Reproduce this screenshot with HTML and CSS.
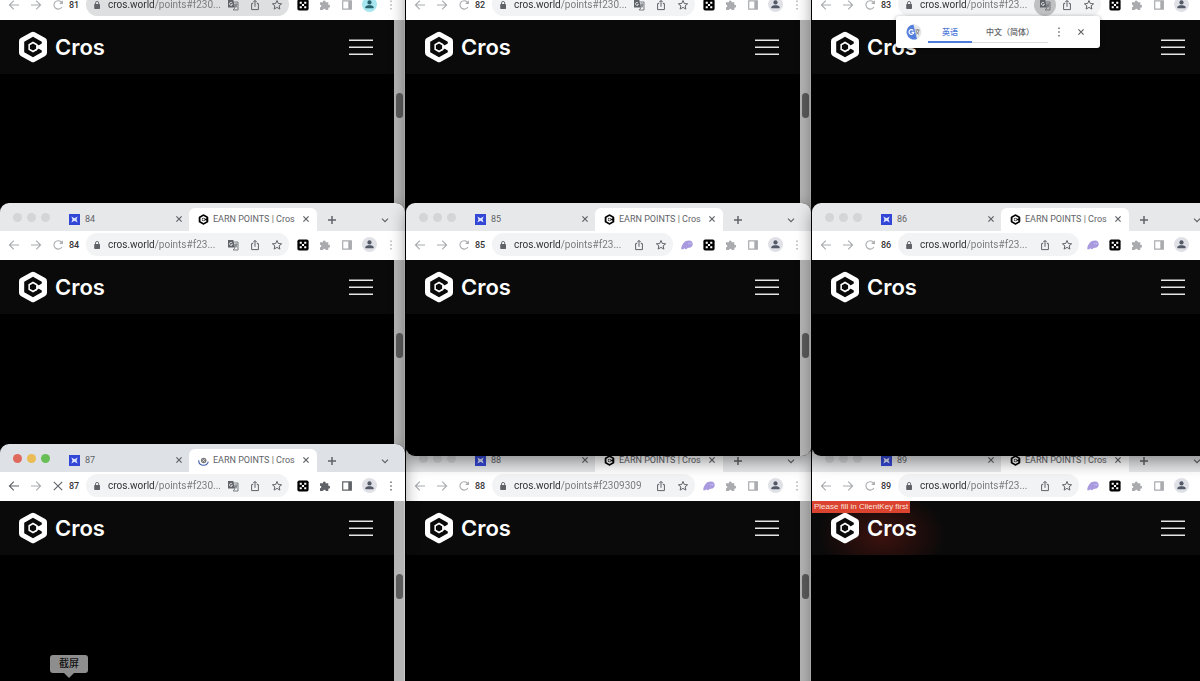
FILE: index.html
```
<!DOCTYPE html>
<html lang="zh-CN">
<head>
    <meta charset="UTF-8">
    <meta name="viewport" content="width=device-width, initial-scale=1.0">
    <title>Desktop</title>
    <link rel="stylesheet" href="styles.css">
</head>
<body>
    <svg class="sprite" aria-hidden="true">
        <symbol id="back" viewBox="0 0 12 12"><path d="M11 6H1.5M5.8 1.6 1.4 6l4.4 4.4" fill="none" stroke="currentColor" stroke-width="1.1"/></symbol>
        <symbol id="forward" viewBox="0 0 12 12"><path d="M1 6h9.5M6.2 1.6 10.6 6l-4.4 4.4" fill="none" stroke="currentColor" stroke-width="1.1"/></symbol>
        <symbol id="reload" viewBox="0 0 12 12"><path d="M9.8 8a4.2 4.2 0 1 1-.6-5l1.2 1.3" fill="none" stroke="currentColor" stroke-width="1.1"/><path d="M10.9 1.2v3.7H7.2z" fill="currentColor"/></symbol>
        <symbol id="stop" viewBox="0 0 12 12"><path d="m1.8 1.8 8.4 8.4m0-8.4-8.4 8.4" fill="none" stroke="currentColor" stroke-width="1.1"/></symbol>
        <symbol id="close" viewBox="0 0 12 12"><path d="m3.4 3.4 5.2 5.2m0-5.2L3.4 8.6" fill="none" stroke="currentColor" stroke-width="1.2"/></symbol>
        <symbol id="plus" viewBox="0 0 12 12"><path d="M6 2v8M2 6h8" fill="none" stroke="currentColor" stroke-width="1.5"/></symbol>
        <symbol id="chevron" viewBox="0 0 12 12"><path d="m3 4.6 3 3 3-3" fill="none" stroke="currentColor" stroke-width="1.2"/></symbol>
        <symbol id="lock" viewBox="0 0 12 12"><rect x="3.2" y="5" width="5.8" height="5" rx=".7" fill="currentColor"/><path d="M4.5 5.4V4a1.6 1.6 0 0 1 3.2 0v1.4" fill="none" stroke="currentColor" stroke-width=".9"/></symbol>
        <symbol id="translate" viewBox="0 0 12 12"><path d="M1 1h5.3l1.8 7.6H1z" fill="currentColor"/><path d="M5.3 4.2A1.5 1.5 0 1 0 5.4 5.4H4" fill="none" stroke="#fff" stroke-width=".7"/><path d="M6.9 3H11v8H6.2l1.8-2.3M7.6 5.2h2.8M9 4.4v.8M10 5.3C9.6 7 8.7 7.9 7.7 8.3M8 5.8c.4 1 1.2 1.9 2.2 2.5" fill="none" stroke="currentColor" stroke-width=".8"/></symbol>
        <symbol id="share" viewBox="0 0 12 12"><path d="M4.2 4.6H2.600v6h6.800v-6H7.800M6 7.800V1.500M4.100 3.300 6 1.400l1.900 1.900" fill="none" stroke="currentColor" stroke-width="1"/></symbol>
        <symbol id="star" viewBox="0 0 12 12"><path d="m6 1.500 1.300 3 3.300.3-2.500 2.100.8 3.200L6 8.400l-2.900 1.700.8-3.200L1.400 4.800l3.300-.3z" fill="none" stroke="currentColor" stroke-width="1"/></symbol>
        <symbol id="dice" viewBox="0 0 12 12"><rect x=".4" y=".4" width="11.200" height="11.200" rx="1.800" fill="#000"/><path d="M2.700 2.700h2.100v2.100H2.700zM7.200 2.700h2.100v2.100H7.200zM4.950 4.950h2.100v2.100h-2.100zM2.700 7.200h2.100v2.100H2.700zM7.200 7.200h2.100v2.100H7.200z" fill="#fff"/></symbol>
        <symbol id="phoenix" viewBox="0 0 12 12"><path d="M.2 10.200C.7 5 3.800 1.500 8 1.600c2.600.1 4 1.700 3.700 4-.2 1.900-1.700 3.300-3.700 3.200-1-.1-1.300.3-2.100.9-1.200.9-2.200.3-2.400-.7-.5.9-1 1.600-3.300 1.200z" fill="#a99ae0"/><path d="M7.900 3.800v1.500M9.700 3.800v1.500" stroke="#e8e2ff" stroke-width=".6"/></symbol>
        <symbol id="puzzle" viewBox="0 0 12 12"><path d="M1 3.200h2.900a1.400 1.400 0 1 1 2.700 0h2.700v2.700a1.400 1.400 0 1 1 0 2.700V11H6.700a1.300 1.300 0 1 0-2.600 0H1V8.300a1.300 1.300 0 1 0 0-2.600z" fill="currentColor"/></symbol>
        <symbol id="panel" viewBox="0 0 12 12"><path d="M1.700 1.900h8.600v8.200H1.700z" fill="none" stroke="currentColor" stroke-width="1.200"/><path d="M7.300 2h3v8h-3z" fill="currentColor"/></symbol>
        <symbol id="person" viewBox="0 0 12 12"><circle cx="6" cy="3.700" r="2.300" fill="currentColor"/><path d="M1.500 10.200V8.900C1.500 7.400 4 6.700 6 6.700s4.500.7 4.500 2.200v1.300z" fill="currentColor"/></symbol>
        <symbol id="dots" viewBox="0 0 12 12"><path d="M5.300 1.500h1.400v1.400H5.300zM5.300 5.300h1.400v1.400H5.300zM5.300 9.100h1.400v1.400H5.300z" fill="currentColor"/></symbol>
        <symbol id="site" viewBox="0 0 12 12"><path d="M0 0h12v12H0z" fill="#3347d6"/><path d="m2.600 2.600 3.400 2 3.400-2L8.200 6l1.200 3.400-3.400-2-3.400 2L3.800 6z" fill="#dfe5ff"/></symbol>
        <symbol id="cros" viewBox="0 0 30 32">
            <path d="M13.200 1.200a3.500 3.500 0 0 1 3.600 0l10.400 5.900A3.500 3.500 0 0 1 29 10.200v11.600a3.500 3.500 0 0 1-1.800 3.100l-10.400 5.900a3.500 3.500 0 0 1-3.600 0L2.800 24.900A3.500 3.500 0 0 1 1 21.800V10.200a3.500 3.500 0 0 1 1.800-3.100z" fill="var(--logo)"/>
            <path d="m15 5.800 8.800 5v1.600l-3.400 2-1.800-1V18.600l1.800-1 3.400 2v1.600l-8.800 5-8.800-5V10.800z" fill="var(--hole)"/>
            <path d="m15 10.600 3.900 2.200 1.600 1.600v3.200l-1.600 1.600-3.900 2.200-4.600-2.700v-5.400z" fill="var(--logo)"/>
            <path d="m15 12.400 3.100 1.800v3.600L15 19.600l-3.100-1.800v-3.600z" fill="var(--hole)"/>
        </symbol>
        <symbol id="loading" viewBox="0 0 12 12"><circle cx="6.200" cy="6" r="3" fill="#777"/><path d="m4.600 7.500 3.200-3.300M5 4.600l2.400 2.900" stroke="#eee" stroke-width=".7"/><path d="M.8 5.800a5.300 5.300 0 0 0 10.400 1.500" fill="none" stroke="#3f5fa8" stroke-width="1.200"/></symbol>
        <symbol id="burger" viewBox="0 0 24 16"><path d="M0 1.200h24M0 8.200h24M0 15.200h24" stroke="#e6e6e6" stroke-width="1.400"/></symbol>
    </svg>

    <main class="desktop" id="desktop">
        <div class="translate-popup">
            <svg class="popup-logo" viewBox="0 0 16 16" aria-hidden="true">
                <circle cx="8" cy="8" r="7.500" fill="#e4e6ea"/>
                <path d="M8 .5a7.500 7.500 0 1 0 3 14.400L7.500 1z" fill="#557fdd"/>
                <path d="M7.300 6.500A2.400 2.400 0 1 0 7.800 8.300H5.500" fill="none" stroke="#fff" stroke-width="1.200"/>
                <path d="M9.300 6h4.200M11.400 5v1M13 6.200c-.5 2-1.500 3.200-2.700 4M10 7c.6 1.500 1.600 2.500 3 3.300" fill="none" stroke="#777" stroke-width=".9"/>
            </svg>
            <button class="language current">英语</button>
            <button class="language">中文（简体）</button>
            <button class="icon" aria-label="Translate options"><svg><use href="#dots"/></svg></button>
            <button class="icon" aria-label="Close translate"><svg><use href="#close"/></svg></button>
        </div>
        <div class="dock-label">截屏</div>
    </main>
    <script src="script.js"></script>
</body>
</html>
```
FILE: styles.css
```
* {
    box-sizing: border-box;
}

body {
    margin: 0;
    font-family: Roboto, "Noto Sans CJK SC", sans-serif;
    font-size: 10px;
    background-color: #000;
}

button {
    padding: 0;
    border: none;
    background: none;
    color: inherit;
    font: inherit;
    cursor: pointer;
}

.sprite {
    display: none;
}

.desktop {
    position: relative;
    height: 100vh;
    overflow: hidden;
}

/* Windows on the desktop */
.window {
    --icon: #a9abae;
    --tabbar: #e7e8ea;
    --light: #d4d5d7;
    position: absolute;
    display: flex;
    flex-direction: column;
    width: 405px;
    height: 253px;
    border-radius: 9px;
    overflow: hidden;
    background-color: #000;
    box-shadow: 0 6px 16px rgba(0, 0, 0, 0.4);
}

.col-1 { left: 0; }
.col-2 { left: 406px; }
.col-3 { left: 812px; }

.row-1 { top: -37px; z-index: 1; }
.row-2 { top: 203px; z-index: 3; }
.row-3 { top: 444px; z-index: 2; }

.window.focused {
    --icon: #5f6368;
    --tabbar: #dee1e6;
    z-index: 4;
}

.tab-bar {
    display: flex;
    align-items: flex-end;
    flex: none;
    height: 28px;
    padding-left: 13px;
    background-color: var(--tabbar);
    color: #5f6368;
}

.lights {
    display: flex;
    align-items: center;
    gap: 5px;
    width: 47px;
    height: 28px;
}

.light {
    width: 9px;
    height: 9px;
    border-radius: 50%;
    background-color: var(--light);
}

.focused .light.red { background-color: #e0695e; }
.focused .light.yellow { background-color: #ebbc53; }
.focused .light.green { background-color: #67bf55; }

.tab {
    display: flex;
    align-items: center;
    gap: 5px;
    width: 129px;
    height: 23px;
    padding: 0 4px 1px 9px;
    border-radius: 6px 6px 0 0;
    font-size: 9px;
}

.tab.active {
    gap: 4px;
    width: 128px;
    padding-right: 5px;
    background-color: #fff;
}

.tab-title {
    flex: 1;
    text-align: left;
    white-space: nowrap;
}

.favicon {
    --logo: #000;
    --hole: #fff;
    width: 11px;
    height: 11px;
}

.icon {
    display: flex;
    flex: none;
    align-items: center;
    justify-content: center;
    width: 22px;
    height: 22px;
    color: inherit;
}

.icon svg {
    width: 12px;
    height: 12px;
}

.tab .icon {
    width: 12px;
}

.new-tab {
    margin-left: 4px;
}

.tab-search {
    margin-left: auto;
    margin-right: 9px;
}

.toolbar {
    display: flex;
    align-items: center;
    flex: none;
    height: 29px;
    padding: 0 3px 2px;
    background-color: #fff;
    color: var(--icon);
}

.focused .forward {
    color: #a9abae;
}

.profile-name {
    width: 17px;
    color: #333;
    font-size: 9px;
    font-weight: 500;
}

.address {
    display: flex;
    flex: 1;
    align-items: center;
    min-width: 0;
    height: 23px;
    margin-right: 3px;
    padding-right: 1px;
    border-radius: 12px;
    background-color: #f1f3f4;
    color: #5f6368;
}

.address.hover {
    background-color: #dedfe0;
}

.address input {
    flex: 1;
    min-width: 0;
    padding: 0;
    border: none;
    outline: none;
    background: linear-gradient(to right, #2b2c2e 47px, #75787c 47px);
    -webkit-background-clip: text;
    background-clip: text;
    color: transparent;
    font: inherit;
}

.pressed {
    border-radius: 50%;
    background-color: #bfc0c2;
}

.avatar svg {
    width: 15px;
    height: 15px;
    padding: 2px;
    border-radius: 50%;
    background-color: #dfe1e6;
    color: #535966;
}

.avatar.cyan svg {
    background-color: #a6e6ee;
    color: #28626c;
}

/* The web page inside each window */
.content {
    position: relative;
    display: flex;
    flex: 1;
}

.site {
    flex: 1;
}

.site-header {
    display: flex;
    align-items: center;
    justify-content: space-between;
    height: 54px;
    padding: 0 21px 1px 18px;
    background-color: #0a0a0a;
}

.site-header.glow {
    background-image: radial-gradient(ellipse 64px 44px at 70px 34px, #3d120e, #0a0a0a);
}

.brand {
    --logo: #fff;
    --hole: #0a0a0a;
    display: flex;
    align-items: center;
    gap: 7px;
    color: #fff;
    font-family: Inter, sans-serif;
    font-size: 22px;
    font-weight: 600;
    text-decoration: none;
}

.brand svg {
    width: 30px;
    height: 32px;
}

.menu svg {
    display: block;
    width: 24px;
    height: 16px;
}

.scrollbar {
    width: 11px;
    padding: 73px 1px 0 2px;
    background-color: #b5b5b5;
    border-right: 1px solid #c8c8c8;
}

.thumb {
    height: 25px;
    border-radius: 4px;
    background-color: #5b5b5b;
}

.notice {
    position: absolute;
    top: 0;
    left: 0;
    padding: 1px 2px;
    background-color: #d9432f;
    color: #fbe3df;
    font-family: "Liberation Sans", sans-serif;
    font-size: 8px;
    line-height: 10px;
}

/* Overlays */
.translate-popup {
    position: absolute;
    top: 16px;
    left: 896px;
    z-index: 5;
    display: flex;
    align-items: center;
    height: 32px;
    padding: 0 8px 0 10px;
    border-radius: 3px;
    background-color: #fff;
    color: #5f6368;
    box-shadow: 0 1px 4px rgba(0, 0, 0, 0.4);
}

.popup-logo {
    width: 16px;
    height: 16px;
    margin-right: 6px;
}

.language {
    height: 22px;
    padding: 0 14px;
    border-bottom: 1px solid #dadce0;
    font-size: 8px;
    font-weight: 500;
}

.language.current {
    border-bottom: 2px solid #4f7bd9;
    color: #4f7bd9;
}

.dock-label {
    position: absolute;
    bottom: 8px;
    left: 50px;
    z-index: 5;
    padding: 0 9px;
    border-radius: 3px;
    background-color: #8e8e8e;
    color: #111;
    font-size: 10px;
    font-weight: 500;
    line-height: 18px;
}

.dock-label::after {
    content: "";
    position: absolute;
    top: 100%;
    left: 50%;
    margin-left: -5px;
    border: 5px solid transparent;
    border-top-color: #8e8e8e;
}
```
FILE: script.js
```
const windows = [
    { id: 81, url: 'f230...', tools: ['translate'], ext: ['dice'], hover: true, cyan: true },
    { id: 82, url: 'f230...', tools: ['translate'], ext: ['dice'] },
    { id: 83, url: 'f23...', tools: ['translate'], ext: ['dice'], pressed: true },
    { id: 84, url: 'f23...', tools: ['translate'], ext: ['dice'] },
    { id: 85, url: 'f23...', tools: [], ext: ['phoenix', 'dice'] },
    { id: 86, url: 'f23...', tools: [], ext: ['phoenix', 'dice'] },
    { id: 87, url: 'f230...', tools: ['translate'], ext: ['dice'], focused: true },
    { id: 88, url: 'f2309309', tools: [], ext: ['phoenix'] },
    { id: 89, url: 'f23...', tools: [], ext: ['phoenix', 'dice'], notice: 'Please fill in ClientKey first' },
];

const desktop = document.getElementById('desktop');

function icon(name, extra = '') {
    return `<button class="icon ${extra}" aria-label="${name}"><svg><use href="#${name}"/></svg></button>`;
}

function windowHtml(w) {
    return `
        <div class="tab-bar">
            <div class="lights">
                <button class="light red" aria-label="Close window"></button>
                <button class="light yellow" aria-label="Minimise"></button>
                <button class="light green" aria-label="Zoom"></button>
            </div>
            <div class="tab">
                <svg class="favicon"><use href="#site"/></svg>
                <button class="tab-title">${w.id}</button>
                ${icon('close')}
            </div>
            <div class="tab active">
                <svg class="favicon"><use href="#${w.focused ? 'loading' : 'cros'}"/></svg>
                <button class="tab-title">EARN POINTS | Cros</button>
                ${icon('close')}
            </div>
            ${icon('plus', 'new-tab')}
            ${icon('chevron', 'tab-search')}
        </div>
        <div class="toolbar">
            ${icon('back')}
            ${icon('forward', 'forward')}
            ${icon(w.focused ? 'stop' : 'reload')}
            <span class="profile-name">${w.id}</span>
            <div class="address ${w.hover ? 'hover' : ''}">
                ${icon('lock')}
                <input type="text" aria-label="Address" value="cros.world/points#${w.url}">
                ${w.tools.map(name => icon(name, w.pressed ? 'pressed' : '')).join('')}
                ${icon('share')}
                ${icon('star')}
            </div>
            ${w.ext.map(name => icon(name)).join('')}
            ${icon('puzzle')}
            ${icon('panel')}
            ${icon('person', w.cyan ? 'avatar cyan' : 'avatar')}
            ${icon('dots')}
        </div>
        <div class="content">
            <div class="site">
                <div class="site-header ${w.notice ? 'glow' : ''}">
                    <a class="brand" href="#"><svg><use href="#cros"/></svg>Cros</a>
                    <button class="menu" aria-label="Menu"><svg><use href="#burger"/></svg></button>
                </div>
            </div>
            <div class="scrollbar"><div class="thumb"></div></div>
            ${w.notice ? `<div class="notice">${w.notice}</div>` : ''}
        </div>`;
}

windows.forEach((w, i) => {
    const el = document.createElement('section');
    el.className = `window row-${Math.floor(i / 3) + 1} col-${i % 3 + 1}`;
    if (w.focused) el.classList.add('focused');
    el.innerHTML = windowHtml(w);
    desktop.appendChild(el);
});
```
